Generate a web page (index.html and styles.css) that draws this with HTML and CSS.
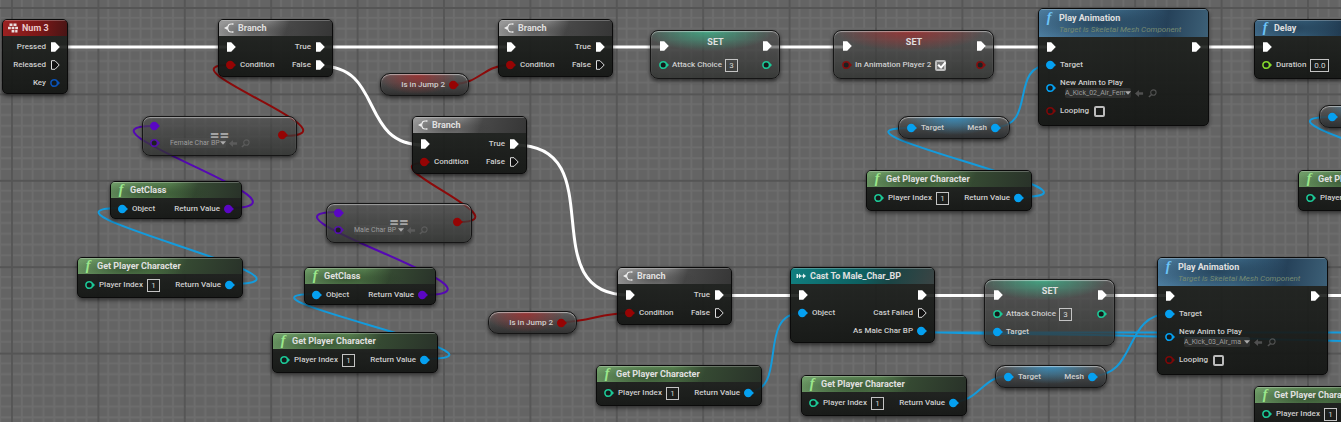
FILE: index.html
```html
<!DOCTYPE html>
<html lang="en">
<head>
<meta charset="utf-8">
<title>Event Graph</title>
<link rel="stylesheet" href="styles.css">
</head>
<body>
<svg class="defs" aria-hidden="true">
  <symbol id="exec" viewBox="0 0 10 10"><path d="M1 .2H5.200L9.800 5 5.200 9.800H1Z" fill="#fff"/></symbol>
  <symbol id="exec-open" viewBox="0 0 10 10"><path d="M1.500.7H5L9.200 5 5 9.300H1.500Z" fill="#111" stroke="#ddd"/></symbol>
  <symbol id="pin" viewBox="0 0 10 10"><circle cx="4.200" cy="5" r="4.200" fill="currentColor"/><path d="M7.500 2.800 10 5 7.500 7.200Z" fill="currentColor"/></symbol>
  <symbol id="pin-open" viewBox="0 0 10 10"><circle cx="4.200" cy="5" r="3.300" fill="#15191a" stroke="currentColor" stroke-width="1.600"/><path d="M8 3 10 5 8 7Z" fill="currentColor"/></symbol>
  <symbol id="branch" viewBox="0 0 10 10"><path d="M9 1H7Q4.300 1 4 3.500L3.500 5 4 6.500Q4.300 9 7 9H9" fill="none" stroke="#eee" stroke-width="1.200"/><path d="M0 5 3.500 3V7ZM8.500 0 10 1 8.500 2ZM8.500 8 10 9 8.500 10Z" fill="#eee"/></symbol>
  <symbol id="keys" viewBox="0 0 10 10"><path d="M1.500.5H4.500V3H1.500ZM5.500.5H8.500V3H5.500ZM0 3.700H2.800V6.200H0ZM3.600 3.700H6.400V6.200H3.600ZM7.200 3.700H10V6.200H7.200ZM3.600 7H6.400V9.500H3.600ZM7.200 7H9.500V9.500H7.200Z" fill="#eadfdf"/></symbol>
  <symbol id="cast" viewBox="0 0 10 10"><path d="M.5 3H2V7H.5ZM2 4.500H3V2.500L5.500 5 3 7.500V5.500H2ZM5.500 4.500H7V2.500L10 5 7 7.500V5.500H5.500Z" fill="#e5f2f2"/></symbol>
  <symbol id="reset" viewBox="0 0 10 10"><path d="M0 5 4.500 1V3.700H9V6.300H4.500V9Z" fill="#666"/></symbol>
  <symbol id="browse" viewBox="0 0 10 10"><circle cx="6" cy="4" r="3" fill="none" stroke="#666" stroke-width="1.200"/><path d="M4 6 1 9" stroke="#666" stroke-width="1.600"/></symbol>
  <symbol id="caret" viewBox="0 0 10 10"><path d="M0 2H10L5 8Z" fill="#aaa"/></symbol>
</svg>

<main class="graph">
  <svg class="wires" aria-hidden="true">
    <defs>
      <pattern id="grid" width="432" height="432" patternUnits="userSpaceOnUse" patternTransform="translate(11 7) scale(.2)">
        <path class="minor" d="M54 0V432M108 0V432M162 0V432M216 0V432M270 0V432M324 0V432M378 0V432M0 54H432M0 108H432M0 162H432M0 216H432M0 270H432M0 324H432M0 378H432"/>
        <path class="major" d="M5 0V432M0 5H432"/>
      </pattern>
    </defs>
    <rect width="100%" height="100%" fill="url(#grid)"/>
    <g class="flow">
      <path d="M56 47H230M320 47H510M602 47H663M770 47H847M985 47H1050M1197 47H1266M721 295.500H800M922 295.500H997M1101 295.500H1168M1315 295.500H1400"/>
      <path d="M320 66C385 66 358 145 424 145M515 145C615 145 530 295 629 295"/>
    </g>
    <g class="bool">
      <path d="M283 136C367 136 157 65 229 65M458 222C526 222 368 163 424 163M453 84C480 84 483 65 510 65M562 322C590 322 600 313 629 313"/>
    </g>
    <g class="cls">
      <path d="M228 208C334 208 61 126 153 126M422 295C534 295 238 212 338 212"/>
    </g>
    <g class="object">
      <path d="M229 284C354 284 8 208 122 208M423 359C543 359 208 294 316 294M1017 197C1139 197 800 128 911 128M1449 197C1571 197 1221 117 1332 117M747 392C790 392 755 313 802 313M952 402C980 402 981 376 1009 376M1092 376C1138 376 1123 314 1169 314M995 127C1038 127 1008 65 1050 65"/>
      <path d="M921 332L998 334M921 332.500H1400M998 334C1110 334 1220 339 1400 342"/>
    </g>
  </svg>

  <article class="node event num3">
    <header><svg class="ico"><use href="#keys"/></svg><h2>Num 3</h2></header>
    <div class="body"><div class="col out">
      <div class="row">Pressed<svg class="pin"><use href="#exec"/></svg></div>
      <div class="row">Released<svg class="pin"><use href="#exec-open"/></svg></div>
      <div class="row">Key<svg class="pin key"><use href="#pin-open"/></svg></div>
    </div></div>
  </article>

  <article class="node branch b1">
    <header><svg class="ico"><use href="#branch"/></svg><h2>Branch</h2></header>
    <div class="body">
      <div class="col"><div class="row"><svg class="pin"><use href="#exec"/></svg></div><div class="row"><svg class="pin red"><use href="#pin"/></svg>Condition</div></div>
      <div class="col out"><div class="row">True<svg class="pin"><use href="#exec"/></svg></div><div class="row">False<svg class="pin"><use href="#exec"/></svg></div></div>
    </div>
  </article>
  <article class="node branch b2">
    <header><svg class="ico"><use href="#branch"/></svg><h2>Branch</h2></header>
    <div class="body">
      <div class="col"><div class="row"><svg class="pin"><use href="#exec"/></svg></div><div class="row"><svg class="pin red"><use href="#pin"/></svg>Condition</div></div>
      <div class="col out"><div class="row">True<svg class="pin"><use href="#exec"/></svg></div><div class="row">False<svg class="pin"><use href="#exec-open"/></svg></div></div>
    </div>
  </article>
  <article class="node branch b3">
    <header><svg class="ico"><use href="#branch"/></svg><h2>Branch</h2></header>
    <div class="body">
      <div class="col"><div class="row"><svg class="pin"><use href="#exec"/></svg></div><div class="row"><svg class="pin red"><use href="#pin"/></svg>Condition</div></div>
      <div class="col out"><div class="row">True<svg class="pin"><use href="#exec"/></svg></div><div class="row">False<svg class="pin"><use href="#exec-open"/></svg></div></div>
    </div>
  </article>
  <article class="node branch b4">
    <header><svg class="ico"><use href="#branch"/></svg><h2>Branch</h2></header>
    <div class="body">
      <div class="col"><div class="row"><svg class="pin"><use href="#exec"/></svg></div><div class="row"><svg class="pin red"><use href="#pin"/></svg>Condition</div></div>
      <div class="col out"><div class="row">True<svg class="pin"><use href="#exec"/></svg></div><div class="row">False<svg class="pin"><use href="#exec-open"/></svg></div></div>
    </div>
  </article>

  <article class="pill var-red j1"><span class="row">Is in Jump 2<svg class="pin red"><use href="#pin"/></svg></span></article>
  <article class="pill var-red j2"><span class="row">Is in Jump 2<svg class="pin red"><use href="#pin"/></svg></span></article>

  <article class="glass set tint-green s1">
    <div class="top"><svg class="pin"><use href="#exec"/></svg><h2>SET</h2><svg class="pin"><use href="#exec"/></svg></div>
    <div class="line"><div class="row"><svg class="pin int"><use href="#pin-open"/></svg><label for="ac1">Attack Choice</label><input class="num" id="ac1" value="3"></div><svg class="pin int"><use href="#pin-open"/></svg></div>
  </article>
  <article class="glass set tint-red s2">
    <div class="top"><svg class="pin"><use href="#exec"/></svg><h2>SET</h2><svg class="pin"><use href="#exec"/></svg></div>
    <div class="line"><div class="row"><svg class="pin red dim"><use href="#pin-open"/></svg><label for="iap">In Animation Player 2</label><input type="checkbox" id="iap" checked></div><svg class="pin red dim"><use href="#pin-open"/></svg></div>
  </article>
  <article class="glass set tint-green s3">
    <div class="top"><svg class="pin"><use href="#exec"/></svg><h2>SET</h2><svg class="pin"><use href="#exec"/></svg></div>
    <div class="line"><div class="row"><svg class="pin int"><use href="#pin-open"/></svg><label for="ac2">Attack Choice</label><input class="num" id="ac2" value="3"></div><svg class="pin int"><use href="#pin-open"/></svg></div>
    <div class="line"><div class="row"><svg class="pin obj"><use href="#pin"/></svg>Target</div></div>
  </article>

  <article class="node play p1">
    <header><span class="fn" aria-hidden="true">f</span><div><h2>Play Animation</h2><p>Target is Skeletal Mesh Component</p></div></header>
    <div class="body">
      <div class="col">
        <div class="row"><svg class="pin"><use href="#exec"/></svg></div>
        <div class="row"><svg class="pin obj"><use href="#pin"/></svg>Target</div>
        <div class="row asset"><svg class="pin obj"><use href="#pin-open"/></svg>
          <div><label for="an1">New Anim to Play</label>
          <div class="pick"><span class="drop"><select id="an1"><option>A_Kick_02_Air_Fem</option></select><svg class="caret"><use href="#caret"/></svg></span><button aria-label="Use selected"><svg><use href="#reset"/></svg></button><button aria-label="Browse"><svg><use href="#browse"/></svg></button></div></div></div>
        <div class="row"><svg class="pin red dim"><use href="#pin-open"/></svg><label for="lp1">Looping</label><input type="checkbox" id="lp1"></div>
      </div>
      <div class="col out"><div class="row"><svg class="pin"><use href="#exec"/></svg></div></div>
    </div>
  </article>
  <article class="node play p2">
    <header><span class="fn" aria-hidden="true">f</span><div><h2>Play Animation</h2><p>Target is Skeletal Mesh Component</p></div></header>
    <div class="body">
      <div class="col">
        <div class="row"><svg class="pin"><use href="#exec"/></svg></div>
        <div class="row"><svg class="pin obj"><use href="#pin"/></svg>Target</div>
        <div class="row asset"><svg class="pin obj"><use href="#pin-open"/></svg>
          <div><label for="an2">New Anim to Play</label>
          <div class="pick"><span class="drop"><select id="an2"><option>A_Kick_03_Air_ma</option></select><svg class="caret"><use href="#caret"/></svg></span><button aria-label="Use selected"><svg><use href="#reset"/></svg></button><button aria-label="Browse"><svg><use href="#browse"/></svg></button></div></div></div>
        <div class="row"><svg class="pin red dim"><use href="#pin-open"/></svg><label for="lp2">Looping</label><input type="checkbox" id="lp2"></div>
      </div>
      <div class="col out"><div class="row"><svg class="pin"><use href="#exec"/></svg></div></div>
    </div>
  </article>

  <article class="node blue delay">
    <header><span class="fn" aria-hidden="true">f</span><h2>Delay</h2></header>
    <div class="body"><div class="col">
      <div class="row"><svg class="pin"><use href="#exec"/></svg></div>
      <div class="row"><svg class="pin float"><use href="#pin-open"/></svg><label for="dur">Duration</label><input class="num wide" id="dur" value="0.0"></div>
    </div></div>
  </article>

  <article class="pill var-blue m1"><span class="row"><svg class="pin obj"><use href="#pin"/></svg>Target</span><span class="row">Mesh<svg class="pin obj"><use href="#pin"/></svg></span></article>
  <article class="pill var-blue m2"><span class="row"><svg class="pin obj"><use href="#pin"/></svg>Target</span><span class="row">Mesh<svg class="pin obj"><use href="#pin"/></svg></span></article>
  <article class="pill var-blue m3"><span class="row"><svg class="pin obj"><use href="#pin"/></svg></span></article>

  <article class="glass equal e1">
    <h2>==</h2>
    <div class="col"><div class="row"><svg class="pin class"><use href="#pin"/></svg></div>
      <div class="row"><svg class="pin class dim"><use href="#pin-open"/></svg><div class="pick"><span class="drop"><select aria-label="Class"><option>Female Char BP</option></select><svg class="caret"><use href="#caret"/></svg></span><button aria-label="Use selected"><svg><use href="#reset"/></svg></button><button aria-label="Browse"><svg><use href="#browse"/></svg></button></div></div></div>
    <svg class="pin red"><use href="#pin"/></svg>
  </article>
  <article class="glass equal e2">
    <h2>==</h2>
    <div class="col"><div class="row"><svg class="pin class"><use href="#pin"/></svg></div>
      <div class="row"><svg class="pin class dim"><use href="#pin-open"/></svg><div class="pick"><span class="drop"><select aria-label="Class"><option>Male Char BP</option></select><svg class="caret"><use href="#caret"/></svg></span><button aria-label="Use selected"><svg><use href="#reset"/></svg></button><button aria-label="Browse"><svg><use href="#browse"/></svg></button></div></div></div>
    <svg class="pin red"><use href="#pin"/></svg>
  </article>

  <article class="node green getclass c1">
    <header><span class="fn" aria-hidden="true">f</span><h2>GetClass</h2></header>
    <div class="body"><div class="row"><svg class="pin obj"><use href="#pin"/></svg>Object</div><div class="row">Return Value<svg class="pin class"><use href="#pin"/></svg></div></div>
  </article>
  <article class="node green getclass c2">
    <header><span class="fn" aria-hidden="true">f</span><h2>GetClass</h2></header>
    <div class="body"><div class="row"><svg class="pin obj"><use href="#pin"/></svg>Object</div><div class="row">Return Value<svg class="pin class"><use href="#pin"/></svg></div></div>
  </article>

  <article class="node green player g1">
    <header><span class="fn" aria-hidden="true">f</span><h2>Get Player Character</h2></header>
    <div class="body"><div class="row"><svg class="pin int"><use href="#pin-open"/></svg><label for="pi1">Player Index</label><input class="num" id="pi1" value="1"></div><div class="row">Return Value<svg class="pin obj"><use href="#pin"/></svg></div></div>
  </article>
  <article class="node green player g2">
    <header><span class="fn" aria-hidden="true">f</span><h2>Get Player Character</h2></header>
    <div class="body"><div class="row"><svg class="pin int"><use href="#pin-open"/></svg><label for="pi2">Player Index</label><input class="num" id="pi2" value="1"></div><div class="row">Return Value<svg class="pin obj"><use href="#pin"/></svg></div></div>
  </article>
  <article class="node green player g3">
    <header><span class="fn" aria-hidden="true">f</span><h2>Get Player Character</h2></header>
    <div class="body"><div class="row"><svg class="pin int"><use href="#pin-open"/></svg><label for="pi3">Player Index</label><input class="num" id="pi3" value="1"></div><div class="row">Return Value<svg class="pin obj"><use href="#pin"/></svg></div></div>
  </article>
  <article class="node green player g4">
    <header><span class="fn" aria-hidden="true">f</span><h2>Get Player Character</h2></header>
    <div class="body"><div class="row"><svg class="pin int"><use href="#pin-open"/></svg><label for="pi4">Player Index</label><input class="num" id="pi4" value="1"></div><div class="row">Return Value<svg class="pin obj"><use href="#pin"/></svg></div></div>
  </article>
  <article class="node green player g5">
    <header><span class="fn" aria-hidden="true">f</span><h2>Get Player Character</h2></header>
    <div class="body"><div class="row"><svg class="pin int"><use href="#pin-open"/></svg><label for="pi5">Player Index</label><input class="num" id="pi5" value="1"></div><div class="row">Return Value<svg class="pin obj"><use href="#pin"/></svg></div></div>
  </article>
  <article class="node green player g6">
    <header><span class="fn" aria-hidden="true">f</span><h2>Get Player Character</h2></header>
    <div class="body"><div class="row"><svg class="pin int"><use href="#pin-open"/></svg><label for="pi6">Player Index</label></div></div>
  </article>
  <article class="node green player g7">
    <header><span class="fn" aria-hidden="true">f</span><h2>Get Player Character</h2></header>
    <div class="body"><div class="row"><svg class="pin int"><use href="#pin-open"/></svg><label for="pi7">Player Index</label><input class="num" id="pi7" value="1"></div></div>
  </article>

  <article class="node teal castto">
    <header><svg class="ico"><use href="#cast"/></svg><h2>Cast To Male_Char_BP</h2></header>
    <div class="body">
      <div class="col"><div class="row"><svg class="pin"><use href="#exec"/></svg></div><div class="row"><svg class="pin obj"><use href="#pin"/></svg>Object</div></div>
      <div class="col out"><div class="row"><svg class="pin"><use href="#exec"/></svg></div><div class="row">Cast Failed<svg class="pin"><use href="#exec-open"/></svg></div><div class="row">As Male Char BP<svg class="pin obj"><use href="#pin"/></svg></div></div>
    </div>
  </article>
</main>
</body>
</html>
```
FILE: styles.css
```css
* { box-sizing: border-box; }
body { margin: 0; background: #646464; font: 500 8px/10px Roboto, sans-serif; color: #cecece; }
h2, p { margin: 0; }
h2 { font-size: 9px; line-height: 12px; font-weight: 700; color: #e0e0e0; white-space: nowrap; }
.defs { position: absolute; width: 0; height: 0; }

.graph { position: relative; height: 100vh; overflow: hidden; }
.wires { position: absolute; inset: 0; width: 100%; height: 100%; fill: none; }
.minor { stroke: #6d6d6d; stroke-width: 9; }
.major { stroke: #555; stroke-width: 9; }
.flow { stroke: #fff; stroke-width: 3; }
.bool { stroke: #8c0a0a; stroke-width: 2; }
.cls { stroke: #5508b4; stroke-width: 2; }
.object { stroke: #149bdc; stroke-width: 2; }

.node, .glass, .pill { position: absolute; box-shadow: 0 2px 4px rgba(0, 0, 0, .6); }
.node { border: 1px solid #0b0b0b; border-radius: 5px; overflow: hidden; background: linear-gradient(rgba(31, 34, 31, .9), rgba(20, 22, 20, .94)); }
.node header { display: flex; align-items: center; gap: 4px; height: 16px; padding: 0 6px 0 5px; box-shadow: inset 0 1px rgba(255, 255, 255, .25); }
.ico { width: 10px; height: 10px; flex: none; }
.fn { width: 10px; text-align: center; font: italic 700 14px/12px "Liberation Serif", serif; color: #9be88c; }
.event header { background: linear-gradient(100deg, #9c2222, #7d1818 55%, #471515); }
.event header h2 { color: #eacaca; }
.branch header { background: radial-gradient(ellipse 42px 12px at 32% 70%, rgba(50, 50, 50, .55), transparent), linear-gradient(110deg, #999, #838383 42%, #484848 60%, #363636); }
.green header { background: radial-gradient(ellipse 60px 12px at 30% 70%, rgba(30, 50, 28, .55), transparent), linear-gradient(110deg, #6f9d68, #57804f 45%, #354932 65%, #293229); }
.blue header, .play header { background: radial-gradient(ellipse 75px 20px at 35% 50%, rgba(20, 40, 58, .6), transparent), linear-gradient(100deg, #4d7d9f, #41708f 45%, #26425a 75%, #3d6077); }
.blue .fn, .play .fn { color: #6cc4f8; }
.teal header { background: linear-gradient(110deg, #117f80, #0d6061 50%, #1b4545 70%, #3b4444); }

.body { display: flex; justify-content: space-between; padding: 2px 7px 4px; }
.col { display: flex; flex-direction: column; }
.out { align-items: flex-end; flex: 1; }
.row { display: flex; align-items: center; gap: 4px; height: 18px; white-space: nowrap; }
.pin { width: 10px; height: 10px; flex: none; color: #fff; }
.pin.red { color: #960404; }
.pin.key { color: #0a52b8; }
.pin.obj { color: #05a0f0; }
.pin.class { color: #5a06c4; }
.pin.int { color: #1cc896; }
.pin.float { color: #84d82c; }
.pin.dim { opacity: .8; }

.num { width: 13px; height: 13px; padding: 0; border: 1px solid #c4c4c4; background: transparent; color: #d6d6d6; font: 8px/10px Roboto, sans-serif; text-align: center; }
.num.wide { width: 19px; }
input[type="checkbox"] { appearance: none; width: 11px; height: 11px; margin: 0 0 0 1px; border: 2px solid #bcbcbc; border-radius: 2px; display: grid; place-items: center; }
input[type="checkbox"]:checked { background: #777; }
input[type="checkbox"]:checked::before { content: ""; width: 9px; height: 8px; background: #fff; clip-path: polygon(0 50%, 18% 32%, 40% 58%, 82% 4%, 100% 20%, 42% 94%); }
.pick { display: flex; align-items: center; gap: 4px; }
.drop { display: flex; align-items: center; height: 10px; border-radius: 2px; background: rgba(90, 90, 90, .3); }
select { appearance: none; width: 60px; height: 10px; padding: 0; border: 0; background: none; color: #9c9c9c; font: 7px/10px Roboto, sans-serif; }
.caret { width: 6px; height: 6px; }
.pick button { display: flex; padding: 0; border: 0; background: none; opacity: .7; }
.pick button svg { width: 9px; height: 9px; }

.glass { border: 1px solid #161616; border-radius: 8px; background: linear-gradient(rgba(75, 75, 75, .6), rgba(45, 47, 45, .78)); box-shadow: inset 0 1px 1px rgba(255, 255, 255, .45), 0 2px 4px rgba(0, 0, 0, .6); }
.set { padding: 5px 7px 4px 8px; }
.top, .line { display: flex; justify-content: space-between; align-items: center; }
.top { height: 20px; }
.top h2 { align-self: flex-start; }
.line { height: 18px; }
.set .row { gap: 3px; }
.tint-green { background: radial-gradient(ellipse 65px 20px at 45% 0, rgba(60, 190, 145, .75), transparent), linear-gradient(rgba(75, 75, 75, .6), rgba(45, 47, 45, .78)); }
.tint-red { background: radial-gradient(ellipse 75px 20px at 48% 0, rgba(165, 45, 45, .8), transparent), linear-gradient(rgba(75, 75, 75, .6), rgba(45, 47, 45, .78)); }

.equal { display: flex; justify-content: space-between; align-items: center; padding: 0 8px 3px 7px; }
.equal .row { height: 17px; }
.equal .pick { padding-left: 6px; gap: 3px; }
.equal h2 { position: absolute; inset: 11px 0 auto; text-align: center; font-size: 17px; line-height: 15px; font-weight: 700; color: #a4a4a4; }
.equal select { width: 50px; }
.e2 select { width: 44px; }

.pill { display: flex; align-items: center; justify-content: space-between; height: 23px; padding: 0 8px; border: 1px solid #161616; border-radius: 10px; box-shadow: inset 0 1px 1px rgba(255, 255, 255, .5), 0 2px 4px rgba(0, 0, 0, .6); }
.var-red { width: 89px; padding-right: 9px; justify-content: flex-end; background: radial-gradient(ellipse 40px 18px at 42% 10%, rgba(160, 45, 45, .8), transparent), linear-gradient(rgba(90, 90, 90, .8), rgba(40, 40, 40, .85)); }
.var-blue { width: 112px; background: radial-gradient(ellipse 48px 18px at 50% 0, rgba(50, 150, 205, .8), transparent), linear-gradient(rgba(90, 90, 90, .8), rgba(35, 38, 40, .85)); }

.play { width: 171px; height: 118px; }
.play header { height: 28px; align-items: flex-start; padding-top: 3px; gap: 5px; }
.play header p { font-style: italic; font-weight: 400; color: #758a72; line-height: 11px; white-space: nowrap; }
.play .body { padding-top: 1px; }
.play .asset { height: 28px; }
.play .asset .pick { padding-left: 5px; }

.num3 { left: 2px; top: 19px; width: 66px; height: 75px; }
.branch { width: 115px; height: 58px; }
.b1 { left: 218px; top: 19px; }
.b2 { left: 498px; top: 19px; }
.b3 { left: 412px; top: 116px; }
.b4 { left: 617px; top: 267px; }
.j1 { left: 380px; top: 73px; }
.j2 { left: 488px; top: 311px; }
.s1 { left: 650px; top: 30px; width: 130px; }
.s2 { left: 833px; top: 30px; width: 161px; }
.s3 { left: 984px; top: 279px; width: 131px; }
.p1 { left: 1038px; top: 8px; }
.p2 { left: 1157px; top: 257px; }
.delay { left: 1254px; top: 19px; width: 115px; height: 60px; }
.m1 { left: 898px; top: 116px; }
.m2 { left: 995px; top: 365px; }
.m3 { left: 1319px; top: 105px; }
.equal { height: 40px; }
.e1 { left: 142px; top: 116px; width: 155px; }
.e2 { left: 326px; top: 203px; width: 146px; }
.getclass { width: 132px; height: 38px; }
.c1 { left: 110px; top: 181px; }
.c2 { left: 304px; top: 267px; }
.player { width: 166px; height: 41px; }
.g1 { left: 77px; top: 257px; }
.g2 { left: 272px; top: 332px; }
.g3 { left: 866px; top: 170px; }
.g4 { left: 596px; top: 365px; }
.g5 { left: 801px; top: 375px; }
.g6 { left: 1298px; top: 170px; }
.g7 { left: 1254px; top: 386px; }
.castto { left: 790px; top: 267px; width: 145px; height: 76px; }
```
